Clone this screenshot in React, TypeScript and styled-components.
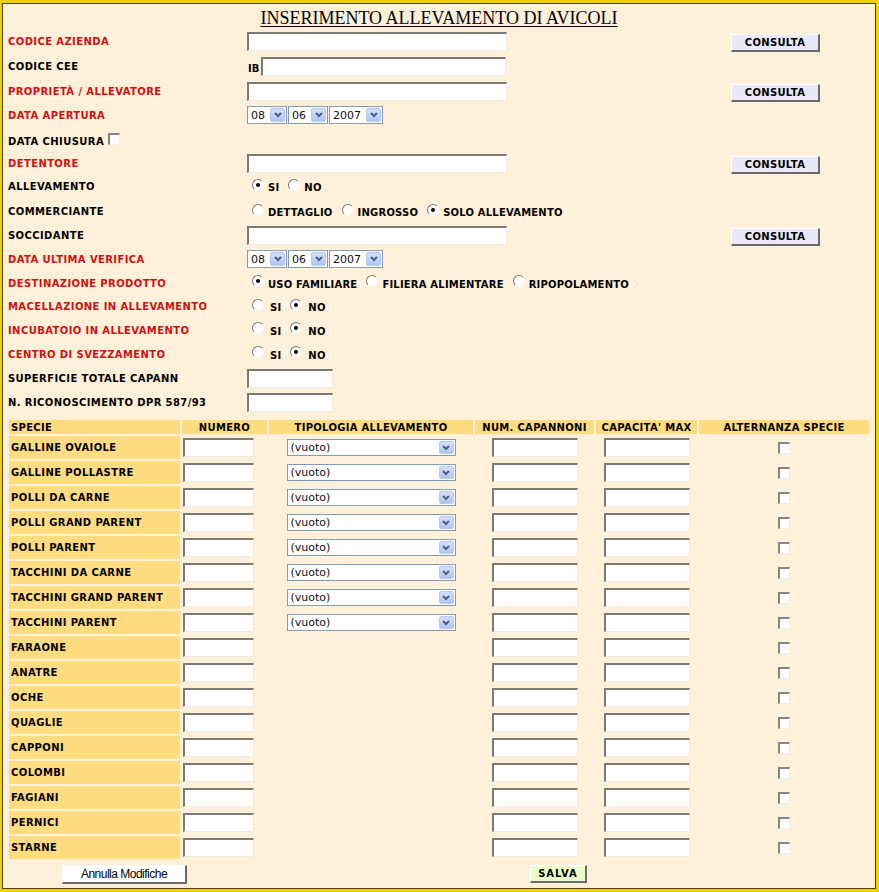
import * as React from 'react';
import styled, { createGlobalStyle } from 'styled-components';

const GlobalStyle = createGlobalStyle`
  html, body {
    margin: 0;
    padding: 0;
    background: #eed200;
  }
  body {
    width: 879px;
    height: 892px;
    overflow: hidden;
  }
`;

const Frame = styled.div`
  box-sizing: border-box;
  width: 874px;
  height: 886px;
  margin: 3px 0 0 2px;
  border: 1px solid #4f4300;
  background: #fff1d9;
  font-family: 'DejaVu Sans', Verdana, sans-serif;
  color: #000;
`;

const Title = styled.h1`
  box-sizing: border-box;
  height: 25px;
  margin: 0;
  padding-top: 4px;
  text-align: center;
  font-family: 'Liberation Serif', 'Times New Roman', serif;
  font-weight: normal;
  font-size: 18px;
  line-height: 20px;
  text-decoration: underline;
  text-underline-offset: 2px;
`;

const FormRow = styled.div<{ $h: number }>`
  display: grid;
  grid-template-columns: 239px 484px 89px;
  align-items: center;
  height: ${p => p.$h}px;
  padding-left: 5px;
`;

const Label = styled.div<{ $req?: boolean }>`
  font-size: 10px;
  font-weight: bold;
  letter-spacing: 0.4px;
  white-space: nowrap;
  color: ${p => (p.$req ? '#d01010' : '#000')};
`;

const Field = styled.div`
  display: flex;
  align-items: center;
`;

const TextBox = styled.input<{ $w: number }>`
  box-sizing: border-box;
  width: ${p => p.$w}px;
  height: 19px;
  margin: 0;
  padding: 0 2px;
  background: #fff;
  border-style: solid;
  border-width: 2px 1px 1px 2px;
  border-color: #7c7a72 #ecebe6 #ecebe6 #7c7a72;
  outline: none;
`;

const Prefix = styled.span`
  font-size: 10px;
  font-weight: bold;
  margin: 3px 2px 0 1px;
`;

const SelectBox = styled.div<{ $w: number; $h: number }>`
  box-sizing: border-box;
  display: flex;
  align-items: center;
  justify-content: space-between;
  width: ${p => p.$w}px;
  height: ${p => p.$h}px;
  background: #fff;
  border: 1px solid #7f9db9;
  padding: 0 1px 0 3px;
  font-size: 11px;
  font-family: 'DejaVu Sans', Tahoma, sans-serif;
  color: #111;
`;

const Arrow = styled.span`
  box-sizing: border-box;
  display: flex;
  align-items: center;
  justify-content: center;
  width: 15px;
  height: calc(100% - 2px);
  border: 1px solid #b9c9f2;
  border-radius: 2px;
  background: linear-gradient(#d3e0fd, #b1c5f3);
`;

const DateGroup = styled.div`
  display: flex;
  gap: 1px;
`;

const Options = styled.div`
  display: flex;
  align-items: center;
`;

const Option = styled.span<{ $wide?: boolean }>`
  display: flex;
  align-items: center;
  margin: 0 4px 0 5px;
  font-size: 10px;
  font-weight: bold;
  letter-spacing: 0.2px;
`;

const OptionText = styled.span<{ $wide?: boolean }>`
  margin-left: ${p => (p.$wide ? 6 : 4)}px;
  margin-top: 2px;
`;

const Radio = styled.i<{ $on?: boolean }>`
  box-sizing: border-box;
  display: flex;
  align-items: center;
  justify-content: center;
  width: 12px;
  height: 12px;
  margin-bottom: 4px;
  border-radius: 50%;
  border: 1px solid;
  border-color: #7a7a7a #f4f4f4 #f4f4f4 #7a7a7a;
  background: #fff;
  &::after {
    content: '';
    width: 4px;
    height: 4px;
    border-radius: 50%;
    background: ${p => (p.$on ? '#000' : 'transparent')};
  }
`;

const CheckBox = styled.i<{ $inline?: boolean }>`
  box-sizing: border-box;
  display: inline-block;
  width: 12px;
  height: 12px;
  vertical-align: 0;
  margin-left: ${p => (p.$inline ? 4 : 0)}px;
  background: #fff;
  border-style: solid;
  border-width: 2px 1px 1px 2px;
  border-color: #858585 #eeeeee #eeeeee #858585;
`;

const Button = styled.button<{ $bg: string; $w: number; $h: number; $spacing?: number }>`
  box-sizing: border-box;
  width: ${p => p.$w}px;
  height: ${p => p.$h}px;
  margin: 0;
  padding: 0;
  background: ${p => p.$bg};
  border-style: solid;
  border-width: 1px 2px 2px 1px;
  border-color: #ffffff #6a6a6a #6a6a6a #ffffff;
  font-family: 'DejaVu Sans', Verdana, sans-serif;
  font-size: 10px;
  font-weight: bold;
  letter-spacing: ${p => p.$spacing ?? 0.3}px;
  color: #000;
`;

const PlainButton = styled(Button)`
  font-family: 'Liberation Sans', Arial, sans-serif;
  font-weight: normal;
  font-size: 12px;
  letter-spacing: -0.5px;
`;

const SpeciesGrid = styled.div`
  display: grid;
  grid-template-columns: 171px 85px 204px 119px 101px 170px;
  grid-template-rows: 14px;
  grid-auto-rows: 23px;
  gap: 2px;
  margin: 5px 0 0 6px;
`;

const HeadCell = styled.div<{ $left?: boolean }>`
  display: flex;
  align-items: center;
  justify-content: ${p => (p.$left ? 'flex-start' : 'center')};
  padding-left: ${p => (p.$left ? 2 : 0)}px;
  background: #ffdc80;
  font-size: 10px;
  font-weight: bold;
  letter-spacing: 0.3px;
  white-space: nowrap;
`;

const SpeciesCell = styled.div`
  display: flex;
  align-items: center;
  padding-left: 2px;
  background: #ffdc80;
  font-size: 10px;
  font-weight: bold;
  letter-spacing: 0.4px;
  white-space: nowrap;
`;

const Cell = styled.div<{ $start?: boolean }>`
  display: flex;
  align-items: center;
  justify-content: ${p => (p.$start ? 'flex-start' : 'center')};
  padding-left: ${p => (p.$start ? 1 : 0)}px;
`;

const Footer = styled.div`
  display: flex;
  align-items: flex-start;
  gap: 343px;
  margin-top: 6px;
  padding-left: 59px;
`;

function Chevron() {
  return (
    <svg width="8" height="6" viewBox="0 0 8 6">
      <polyline points="1,1 4,4 7,1" fill="none" stroke="#4d6185" strokeWidth="2" />
    </svg>
  );
}

function Select({ value, w, h }: { value: string; w: number; h: number }) {
  return (
    <SelectBox $w={w} $h={h}>
      {value}
      <Arrow>
        <Chevron />
      </Arrow>
    </SelectBox>
  );
}

function DateSelect() {
  return (
    <DateGroup>
      <Select value="08" w={40} h={18} />
      <Select value="06" w={40} h={18} />
      <Select value="2007" w={54} h={18} />
    </DateGroup>
  );
}

function Radios({ items, on, wide }: { items: string[]; on: number; wide?: boolean }) {
  return (
    <Options>
      {items.map((t, i) => (
        <Option key={t}>
          <Radio $on={i === on} />
          <OptionText $wide={wide}>{t}</OptionText>
        </Option>
      ))}
    </Options>
  );
}

const Consulta = () => (
  <Button $bg="#e9e9f8" $w={89} $h={18}>
    CONSULTA
  </Button>
);

type Row = {
  label: string;
  req?: boolean;
  h: number;
  field?: React.ReactNode;
  button?: boolean;
  check?: boolean;
};

const rows: Row[] = [
  { label: 'CODICE AZIENDA', req: true, h: 25, field: <TextBox $w={260} />, button: true },
  {
    label: 'CODICE CEE',
    h: 25,
    field: (
      <>
        <Prefix>IB</Prefix>
        <TextBox $w={245} />
      </>
    ),
  },
  { label: 'PROPRIETÀ / ALLEVATORE', req: true, h: 24, field: <TextBox $w={260} />, button: true },
  { label: 'DATA APERTURA', req: true, h: 24, field: <DateSelect /> },
  { label: 'DATA CHIUSURA', h: 25, check: true },
  { label: 'DETENTORE', req: true, h: 22, field: <TextBox $w={260} />, button: true },
  { label: 'ALLEVAMENTO', h: 25, field: <Radios items={['SI', 'NO']} on={0} /> },
  {
    label: 'COMMERCIANTE',
    h: 25,
    field: <Radios items={['DETTAGLIO', 'INGROSSO', 'SOLO ALLEVAMENTO']} on={2} />,
  },
  { label: 'SOCCIDANTE', h: 23, field: <TextBox $w={260} />, button: true },
  { label: 'DATA ULTIMA VERIFICA', req: true, h: 24, field: <DateSelect /> },
  {
    label: 'DESTINAZIONE PRODOTTO',
    req: true,
    h: 24,
    field: <Radios items={['USO FAMILIARE', 'FILIERA ALIMENTARE', 'RIPOPOLAMENTO']} on={0} />,
  },
  { label: 'MACELLAZIONE IN ALLEVAMENTO', req: true, h: 23, field: <Radios items={['SI', 'NO']} on={1} wide /> },
  { label: 'INCUBATOIO IN ALLEVAMENTO', req: true, h: 24, field: <Radios items={['SI', 'NO']} on={1} wide /> },
  { label: 'CENTRO DI SVEZZAMENTO', req: true, h: 24, field: <Radios items={['SI', 'NO']} on={1} wide /> },
  { label: 'SUPERFICIE TOTALE CAPANN', h: 24, field: <TextBox $w={86} /> },
  { label: 'N. RICONOSCIMENTO DPR 587/93', h: 25, field: <TextBox $w={86} /> },
];

const species: [string, boolean][] = [
  ['GALLINE OVAIOLE', true],
  ['GALLINE POLLASTRE', true],
  ['POLLI DA CARNE', true],
  ['POLLI GRAND PARENT', true],
  ['POLLI PARENT', true],
  ['TACCHINI DA CARNE', true],
  ['TACCHINI GRAND PARENT', true],
  ['TACCHINI PARENT', true],
  ['FARAONE', false],
  ['ANATRE', false],
  ['OCHE', false],
  ['QUAGLIE', false],
  ['CAPPONI', false],
  ['COLOMBI', false],
  ['FAGIANI', false],
  ['PERNICI', false],
  ['STARNE', false],
];

export default function App() {
  return (
    <>
      <GlobalStyle />
      <Frame>
        <Title>INSERIMENTO ALLEVAMENTO DI AVICOLI</Title>
        {rows.map(r => (
          <FormRow key={r.label} $h={r.h}>
            <Label $req={r.req}>
              {r.label}
              {r.check && <CheckBox $inline />}
            </Label>
            <Field>{r.field}</Field>
            <div>{r.button && <Consulta />}</div>
          </FormRow>
        ))}
        <SpeciesGrid>
          <HeadCell $left>SPECIE</HeadCell>
          <HeadCell>NUMERO</HeadCell>
          <HeadCell>TIPOLOGIA ALLEVAMENTO</HeadCell>
          <HeadCell>NUM. CAPANNONI</HeadCell>
          <HeadCell>CAPACITA' MAX</HeadCell>
          <HeadCell>ALTERNANZA SPECIE</HeadCell>
          {species.map(([name, hasType]) => (
            <React.Fragment key={name}>
              <SpeciesCell>{name}</SpeciesCell>
              <Cell $start>
                <TextBox $w={71} />
              </Cell>
              <Cell>{hasType && <Select value="(vuoto)" w={169} h={17} />}</Cell>
              <Cell>
                <TextBox $w={86} />
              </Cell>
              <Cell>
                <TextBox $w={86} />
              </Cell>
              <Cell>
                <CheckBox />
              </Cell>
            </React.Fragment>
          ))}
        </SpeciesGrid>
        <Footer>
          <PlainButton $bg="#ffffff" $w={125} $h={19}>
            Annulla Modifiche
          </PlainButton>
          <Button $bg="#edfdca" $w={57} $h={18} $spacing={1}>
            SALVA
          </Button>
        </Footer>
      </Frame>
    </>
  );
}
